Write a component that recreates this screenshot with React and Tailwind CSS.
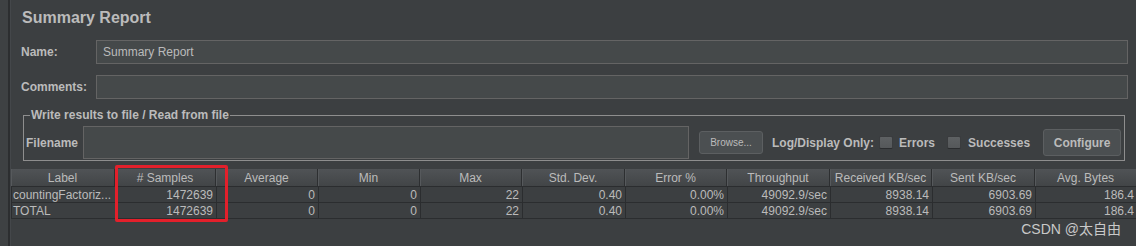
import React from "react";

const cols = [
  "Label",
  "# Samples",
  "Average",
  "Min",
  "Max",
  "Std. Dev.",
  "Error %",
  "Throughput",
  "Received KB/sec",
  "Sent KB/sec",
  "Avg. Bytes",
];

const rows = [
  ["countingFactoriz...", "1472639", "0", "0", "22", "0.40", "0.00%", "49092.9/sec", "8938.14", "6903.69", "186.4"],
  ["TOTAL", "1472639", "0", "0", "22", "0.40", "0.00%", "49092.9/sec", "8938.14", "6903.69", "186.4"],
];

const gridCols =
  "grid grid-cols-[104px_101px_102px_102px_102px_103px_102px_103px_102px_103px_102px]";

function Checkbox() {
  return (
    <span className="inline-block w-[14px] h-[13px] rounded-[2px] bg-gradient-to-b from-[#5e6163] to-[#55585a] border border-[#3a3c3e] border-b-[#2a2c2e]" />
  );
}

export default function App() {
  return (
    <div className="w-[1136px] h-[246px] overflow-hidden bg-[#3c3f41] flex font-['Liberation_Sans',Arial,sans-serif] text-[#bbbbbb]">
      <div className="w-[8px] bg-[#3e4143]" />
      <div className="w-[2px] bg-[#2c2e30]" />
      <div className="w-[1px] bg-[#44474a]" />
      <div className="flex-1 flex flex-col relative min-w-0">
        <div className="pt-[9px] pl-[11px] h-[26px] text-[16px] leading-[18px] font-bold">Summary Report</div>

        <div className="mt-[14px] flex items-center pr-[8px]">
          <div className="w-[85px] pl-[10px] text-[12px] font-bold">Name:</div>
          <div className="flex-1 h-[24px] bg-[#45494a] border border-[#646464] flex items-center px-[6px] text-[12px]">
            Summary Report
          </div>
        </div>

        <div className="mt-[11px] flex items-center pr-[8px]">
          <div className="w-[85px] pl-[10px] text-[12px] font-bold">Comments:</div>
          <div className="flex-1 h-[24px] bg-[#45494a] border border-[#646464]" />
        </div>

        <fieldset className="mt-[9px] ml-[12px] mr-[11px] border border-[#8e8e8e] pt-[4px] pb-[1px] pl-[2px] pr-[3px]">
          <legend className="ml-[4px] px-[1px] text-[12px] leading-[14px] font-bold">
            Write results to file / Read from file
          </legend>
          <div className="flex items-center">
            <div className="w-[57px] text-[12px] font-bold">Filename</div>
            <div className="w-[606px] h-[33px] bg-[#45494a] border border-[#646464]" />
            <button className="ml-[10px] w-[64px] h-[23px] rounded-[3px] bg-[#4b4f51] border border-[#5c5f61] text-[10px] text-[#bbbbbb] flex items-center justify-center">
              Browse...
            </button>
            <div className="ml-[9px] text-[12px] font-bold whitespace-nowrap">Log/Display Only:</div>
            <div className="ml-[5px] flex items-center"><Checkbox /></div>
            <div className="ml-[6px] text-[12px] font-bold">Errors</div>
            <div className="ml-[12px] flex items-center"><Checkbox /></div>
            <div className="ml-[7px] text-[12px] font-bold">Successes</div>
            <button className="ml-[13px] w-[78px] h-[27px] rounded-[3px] bg-[#4b4f51] border border-[#5c5f61] text-[12px] font-bold text-[#bbbbbb] flex items-center justify-center">
              Configure
            </button>
          </div>
        </fieldset>

        <div className="mt-[8px] relative">
          <div className={`${gridCols} h-[17px] bg-gradient-to-b from-[#505356] to-[#424547]`}>
            {cols.map((c, i) => (
              <div
                key={i}
                className="flex items-center justify-center text-[12px] leading-[14px] whitespace-nowrap overflow-hidden border-r border-r-[#2d2f31] shadow-[inset_1px_0_0_#56595c]"
              >
                {c}
              </div>
            ))}
          </div>
          {rows.map((r, ri) => (
            <div key={ri} className={`${gridCols} h-[16px] border-t border-[#2b2d2f]`}>
              {r.map((v, i) => (
                <div
                  key={i}
                  className={`flex items-center text-[12px] leading-[14px] whitespace-nowrap overflow-hidden border-l border-[#2b2d2f] ${
                    i === 0 ? "justify-start pl-[1px]" : "justify-end pr-[3px]"
                  }`}
                >
                  {v}
                </div>
              ))}
            </div>
          ))}
          <div className="border-t border-[#2b2d2f] w-[1126px]" />
          <div className="absolute left-[104px] top-[-4px] w-[113px] h-[57px] border-[3px] border-[#e3202b] rounded-[2px]" />
        </div>

        <div className="absolute right-[15px] bottom-[9px] text-[14px] leading-[16px] text-[#c9c9c9] font-['Liberation_Sans','Noto_Sans_CJK_SC',sans-serif]">
          CSDN @太自由
        </div>
      </div>
    </div>
  );
}
